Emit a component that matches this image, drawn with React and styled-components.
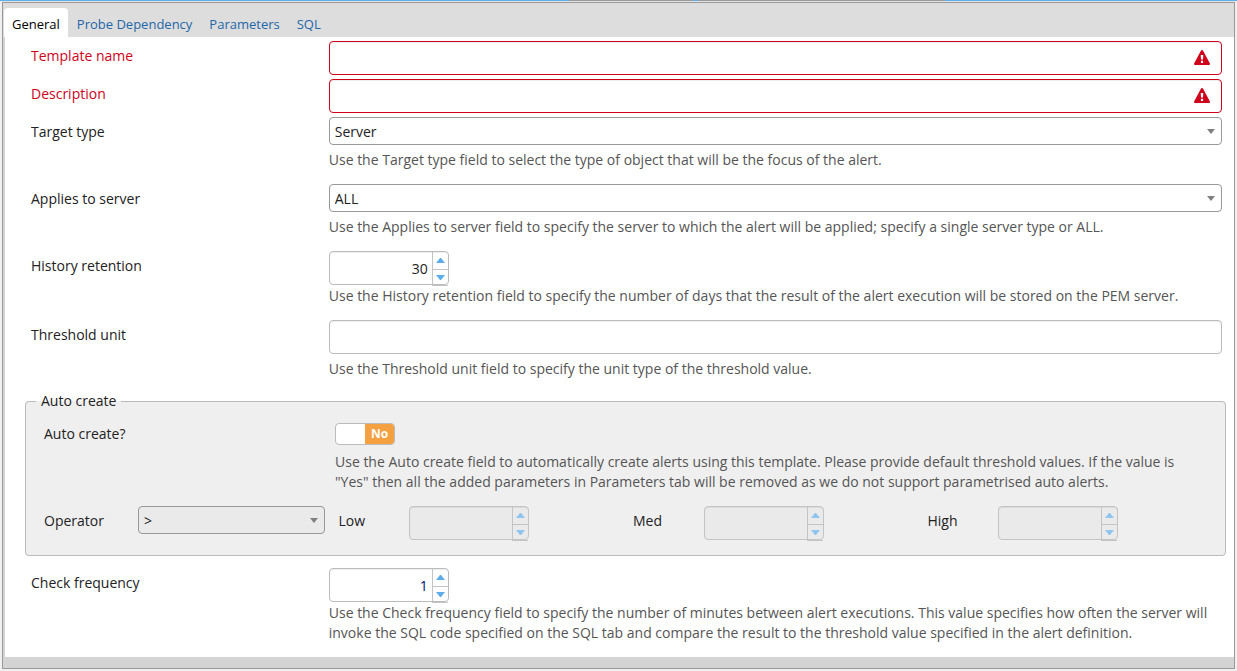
import React, { useState } from "react";
import styled, { createGlobalStyle, css } from "styled-components";

const tabs = ["General", "Probe Dependency", "Parameters", "SQL"];

function WarningIcon() {
  return (
    <Warning viewBox="0 0 16 15" aria-hidden="true">
      <path
        fillRule="evenodd"
        d="M8 0 C8.5 0 8.8 .3 9.1 .8 L15.8 13.2 C16.3 14.2 15.9 15 14.8 15 H1.2 C.1 15 -.3 14.2 .2 13.2 L6.9 .8 C7.2 .3 7.5 0 8 0 Z M6.7 5 L7 9.4 H9 L9.3 5 Z M6.9 10.8 V13 H9.1 V10.8 Z"
      />
    </Warning>
  );
}

function TextField({ id, label, invalid, help }) {
  return (
    <Row>
      <Label htmlFor={id} $invalid={invalid}>
        {label}
      </Label>
      <div>
        <Control>
          <TextInput id={id} type="text" $invalid={invalid} />
          {invalid && <WarningIcon />}
        </Control>
        {help && <Help>{help}</Help>}
      </div>
    </Row>
  );
}

function SelectBox({ id, value, muted }) {
  return (
    <Control>
      <Select id={id} defaultValue={value} $muted={muted}>
        <option>{value}</option>
      </Select>
      <Caret viewBox="0 0 8 5" aria-hidden="true">
        <path d="M0 0h8L4 5z" />
      </Caret>
    </Control>
  );
}

function SelectField({ id, label, value, help }) {
  return (
    <Row>
      <Label htmlFor={id}>{label}</Label>
      <div>
        <SelectBox id={id} value={value} />
        <Help>{help}</Help>
      </div>
    </Row>
  );
}

function Spinner({ id, initial = "", disabled, color }) {
  const [value, setValue] = useState(initial);

  const step = function (amount) {
    setValue(Number(value) + amount);
  };

  return (
    <SpinnerBox $disabled={disabled}>
      <SpinnerInput
        id={id}
        type="number"
        value={value}
        disabled={disabled}
        $color={color}
        onChange={(e) => setValue(e.target.value)}
      />
      <Steps $disabled={disabled}>
        <button
          type="button"
          aria-label="Increase"
          disabled={disabled}
          onClick={() => step(1)}
        >
          <svg viewBox="0 0 9 5" aria-hidden="true">
            <path d="M0 5h9L5 0H4z" />
          </svg>
        </button>
        <button
          type="button"
          aria-label="Decrease"
          disabled={disabled}
          onClick={() => step(-1)}
        >
          <svg viewBox="0 0 9 5" aria-hidden="true">
            <path d="M0 0h9L5 5H4z" />
          </svg>
        </button>
      </Steps>
    </SpinnerBox>
  );
}

function SpinnerField({ id, label, initial, color, help }) {
  return (
    <Row>
      <Label htmlFor={id}>{label}</Label>
      <div>
        <Spinner id={id} initial={initial} color={color} />
        <Help $tight>{help}</Help>
      </div>
    </Row>
  );
}

function App() {
  const [active, setActive] = useState("General");
  const [autoCreate, setAutoCreate] = useState(false);

  return (
    <>
      <GlobalStyle />
      <TopStrip />
      <Panel>
        <TabBar role="tablist">
          {tabs.map((tab) => (
            <Tab
              key={tab}
              type="button"
              role="tab"
              aria-selected={tab === active}
              $active={tab === active}
              onClick={() => setActive(tab)}
            >
              {tab}
            </Tab>
          ))}
        </TabBar>
        <Form>
          <TextField id="template-name" label="Template name" invalid />
          <TextField id="description" label="Description" invalid />
          <SelectField
            id="target-type"
            label="Target type"
            value="Server"
            help="Use the Target type field to select the type of object that will be the focus of the alert."
          />
          <SelectField
            id="applies-to"
            label="Applies to server"
            value="ALL"
            help="Use the Applies to server field to specify the server to which the alert will be applied; specify a single server type or ALL."
          />
          <SpinnerField
            id="history"
            label="History retention"
            initial={30}
            help="Use the History retention field to specify the number of days that the result of the alert execution will be stored on the PEM server."
          />
          <TextField
            id="threshold-unit"
            label="Threshold unit"
            help="Use the Threshold unit field to specify the unit type of the threshold value."
          />
          <Group>
            <legend>Auto create</legend>
            <GroupRow>
              <Label htmlFor="auto-create">Auto create?</Label>
              <div>
                <Switch $on={autoCreate}>
                  <input
                    id="auto-create"
                    type="checkbox"
                    checked={autoCreate}
                    onChange={(e) => setAutoCreate(e.target.checked)}
                  />
                  <span>{autoCreate ? "Yes" : "No"}</span>
                </Switch>
                <Help>
                  Use the Auto create field to automatically create alerts using
                  this template. Please provide default threshold values. If the
                  value is "Yes" then all the added parameters in Parameters tab
                  will be removed as we do not support parametrised auto alerts.
                </Help>
              </div>
            </GroupRow>
            <Thresholds>
              <Operator>
                <Label htmlFor="operator">Operator</Label>
                <SelectBox id="operator" value=">" muted />
              </Operator>
              {["Low", "Med", "High"].map((level) => (
                <Threshold key={level}>
                  <Label htmlFor={level}>{level}</Label>
                  <Spinner id={level} disabled />
                </Threshold>
              ))}
            </Thresholds>
          </Group>
          <SpinnerField
            id="frequency"
            label="Check frequency"
            initial={1}
            color="#00127a"
            help="Use the Check frequency field to specify the number of minutes between alert executions. This value specifies how often the server will invoke the SQL code specified on the SQL tab and compare the result to the threshold value specified in the alert definition."
          />
        </Form>
      </Panel>
    </>
  );
}

export default App;

const GlobalStyle = createGlobalStyle`
  * {
    box-sizing: border-box;
  }
  body {
    margin: 0;
    background: #f0f0f0;
    color: #222;
    font: 14px/20px "Open Sans", sans-serif;
  }
  button, input, select {
    font: inherit;
    color: inherit;
  }
`;

/* lower edge of the grid rows above the panel */
const TopStrip = styled.div`
  height: 2px;
  border-bottom: 1px solid #e4e4e4;
  background: linear-gradient(
    to right,
    #5dacec 46%,
    #999 46% 56%,
    #5dacec 56% 56.4%,
    #999 56.4% 76.4%,
    #5dacec 76.4%
  );
`;

const Panel = styled.div`
  margin: 0 2px;
  border: 1px solid #999;
  padding-bottom: 11px;
  background: #d4d4d4;
`;

const TabBar = styled.div`
  display: flex;
  gap: 1px;
  padding: 5px 1px 0;
  background: #ddd;
`;

const Tab = styled.button`
  height: 29px;
  padding: 3px 8px 0;
  border: 0;
  border-radius: 4px 4px 0 0;
  background: ${({ $active }) => ($active ? "#fff" : "none")};
  color: ${({ $active }) => ($active ? "#000" : "#2467a8")};
  font-size: 13px;
  cursor: pointer;
`;

const Form = styled.form`
  margin-left: 2px;
  padding: 4px 12px 0 26px;
  background: #fff;
  display: flow-root;
`;

const Row = styled.div`
  display: grid;
  grid-template-columns: 1fr 3fr;
  margin-bottom: 4px;
`;

const Label = styled.label`
  padding-top: 5px;
  color: ${({ $invalid }) => ($invalid ? "#d0021b" : "inherit")};
`;

const Help = styled.p`
  margin: ${({ $tight }) => ($tight ? "1px" : "5px")} 0 10px;
  color: #555;
`;

const Control = styled.div`
  position: relative;
`;

const TextInput = styled.input`
  display: block;
  width: 100%;
  height: 34px;
  padding: 6px 36px 6px 6px;
  border: 1px solid ${({ $invalid }) => ($invalid ? "#d0021b" : "#bbb")};
  border-radius: 4px;
  background: #fff;
  box-shadow: inset 0 1px 1px rgb(0 0 0 / 7%);
`;

const Warning = styled.svg`
  position: absolute;
  top: 9px;
  right: 12px;
  width: 16px;
  height: 15px;
  fill: #d0021b;
`;

const Select = styled.select`
  display: block;
  appearance: none;
  width: 100%;
  height: 28px;
  padding: 2px 24px 0 5px;
  border: 1px solid #999;
  border-radius: 4px;
  background: ${({ $muted }) => ($muted ? "#eaeaea" : "#fff")};
`;

const Caret = styled.svg`
  position: absolute;
  top: 12px;
  right: 7px;
  width: 8px;
  height: 5px;
  fill: #808080;
  pointer-events: none;
`;

const SpinnerBox = styled.div`
  display: flex;
  width: 120px;
  height: 34px;
  border: 1px solid #bbb;
  border-radius: 4px;
  background: #fff;
  box-shadow: inset 0 1px 1px rgb(0 0 0 / 7%);
  ${({ $disabled }) =>
    $disabled &&
    css`
      border-color: #c4c4c4;
      background: #eaeaea;
    `}
`;

const SpinnerInput = styled.input`
  flex: 1;
  min-width: 0;
  padding: 2px 4px 0;
  border: 0;
  background: none;
  color: ${({ $color }) => $color || "inherit"};
  text-align: right;
  appearance: textfield;
  &::-webkit-inner-spin-button {
    display: none;
  }
`;

/* one pixel taller than the box, so its lower edge shows below it */
const Steps = styled.div`
  display: grid;
  grid-template-rows: 17px 16px;
  width: 16px;
  height: 34px;
  border-left: 1px solid #c4c4c4;
  border-bottom: 1px solid #c4c4c4;
  button {
    display: flex;
    align-items: center;
    justify-content: center;
    padding: 0;
    border: 0;
    background: none;
  }
  button + button {
    border-top: 1px solid #c4c4c4;
  }
  svg {
    width: 9px;
    height: 5px;
    fill: ${({ $disabled }) => ($disabled ? "#8fc4ee" : "#5dacec")};
  }
`;

const Group = styled.fieldset`
  margin: 0 -4px 12px -6px;
  min-width: 0;
  padding: 10px 3px 15px 18px;
  border: 1px solid #bbb;
  border-radius: 4px;
  background: #efefef;
  legend {
    margin-left: -8px;
    padding: 0 5px;
    line-height: 16px;
  }
`;

const GroupRow = styled(Row)`
  padding-right: 14px;
`;

const Switch = styled.label`
  display: flex;
  justify-content: ${({ $on }) => ($on ? "flex-start" : "flex-end")};
  position: relative;
  width: 60px;
  height: 22px;
  margin: 4px 0 7px;
  border: 1px solid #bbb;
  border-radius: 4px;
  background: #fff;
  overflow: hidden;
  input {
    position: absolute;
    inset: 0;
    margin: 0;
    opacity: 0;
  }
  span {
    width: 29px;
    background: ${({ $on }) => ($on ? "#5dacec" : "#f5a141")};
    color: #fff;
    font-size: 12px;
    font-weight: 700;
    text-align: center;
  }
`;

const Thresholds = styled.div`
  display: grid;
  grid-template-columns: repeat(4, 1fr);
`;

const Operator = styled.div`
  display: grid;
  grid-template-columns: 94px 1fr;
  align-items: start;
  padding-right: 14px;
`;

const Threshold = styled.div`
  display: grid;
  grid-template-columns: 24% 1fr;
  align-items: start;
`;
